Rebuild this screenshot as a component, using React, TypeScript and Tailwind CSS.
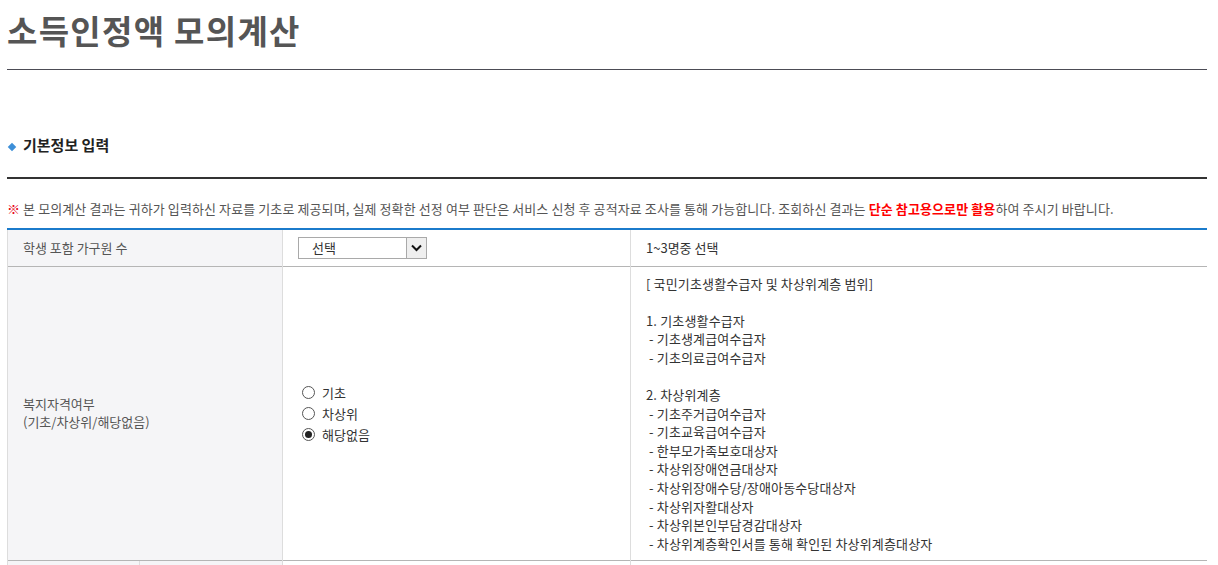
const FONT = { fontFamily: '"Malgun Gothic", "Noto Sans CJK KR", "Noto Sans", sans-serif' };

const lines = [
  "[ 국민기초생활수급자 및 차상위계층 범위]",
  "",
  "1. 기초생활수급자",
  " - 기초생계급여수급자",
  " - 기초의료급여수급자",
  "",
  "2. 차상위계층",
  " - 기초주거급여수급자",
  " - 기초교육급여수급자",
  " - 한부모가족보호대상자",
  " - 차상위장애연금대상자",
  " - 차상위장애수당/장애아동수당대상자",
  " - 차상위자활대상자",
  " - 차상위본인부담경감대상자",
  " - 차상위계층확인서를 통해 확인된 차상위계층대상자",
];

function Radio({ checked, label }: { checked?: boolean; label: string }) {
  return (
    <label className="flex items-center h-[21px] text-[13px] text-[#333]">
      <span className="w-[13px] h-[13px] rounded-full border border-[#555] bg-white flex items-center justify-center mr-[7px]">
        {checked && <span className="w-[7px] h-[7px] rounded-full bg-[#222]" />}
      </span>
      {label}
    </label>
  );
}

export default function App() {
  return (
    <div className="bg-white min-h-screen pl-[7px] pr-[11px] pb-10" style={FONT}>
      {/* 페이지 제목 */}
      <h1 className="text-[33px] font-bold text-[#555] leading-[60px] pb-[9px] border-b border-[#4c4c55] tracking-[1.3px]">
        소득인정액 모의계산
      </h1>

      {/* 섹션 제목 */}
      <h2 className="mt-[65px] flex items-center text-[15px] font-bold text-[#222] leading-[20px] pb-[22px] border-b-2 border-[#333]">
        <span className="inline-block w-[6px] h-[6px] bg-[#3d8fd8] rotate-45 ml-[2px] mr-[8px] mt-[3px]" />
        기본정보 입력
      </h2>

      <p className="mt-[20px] text-[13px] leading-[20px] text-[#555] tracking-[0.1px]">
        <span className="text-[#e60012] font-bold">※</span> 본 모의계산 결과는 귀하가 입력하신 자료를 기초로 제공되며, 실제 정확한 선정 여부 판단은 서비스 신청 후 공적자료 조사를 통해 가능합니다. 조회하신 결과는{" "}
        <span className="text-[#f00] font-bold">단순 참고용으로만 활용</span>하여 주시기 바랍니다.
      </p>

      <table className="mt-[9px] w-full table-fixed border-collapse border-t-2 border-[#1b7bcb] text-[13px]">
        <colgroup>
          <col className="w-[275px]" />
          <col className="w-[348px]" />
          <col />
        </colgroup>
        <tbody>
          <tr className="h-[37px] border-b border-[#b5b5b5]">
            <th className="bg-[#f5f5f7] border-l border-[#ddd] text-left font-normal text-[#555] pl-[15px]">
              학생 포함 가구원 수
            </th>
            <td className="border-l border-[#ddd] pl-[15px]">
              <div className="flex w-[129px] h-[22px] border border-[#a9a9a9] bg-white">
                <span className="flex-1 pl-[13px] leading-[20px] text-[#333]">선택</span>
                <span className="w-[20px] h-full border-l border-[#a9a9a9] bg-[#efefef] flex items-center justify-center">
                  <svg width="11" height="8" viewBox="0 0 11 8">
                    <path d="M1 1.5 L5.5 6 L10 1.5" fill="none" stroke="#111" strokeWidth="2" />
                  </svg>
                </span>
              </div>
            </td>
            <td className="border-l border-[#ddd] pl-[15px] text-[#333]">1~3명중 선택</td>
          </tr>
          <tr className="border-b border-[#b5b5b5]">
            <th className="bg-[#f5f5f7] border-l border-[#ddd] text-left font-normal text-[#555] pl-[15px] leading-[18px]">
              복지자격여부
              <br />
              (기초/차상위/해당없음)
            </th>
            <td className="border-l border-[#ddd] pl-[19px]">
              <div className="flex flex-col">
                <Radio label="기초" />
                <Radio label="차상위" />
                <Radio checked label="해당없음" />
              </div>
            </td>
            <td className="border-l border-[#ddd] pl-[15px] pt-[8px] pb-[7px] text-[#333] leading-[18.6px] tracking-[0.15px]">
              {lines.map((l, i) => (
                <div key={i} className="whitespace-pre h-[18.6px]">
                  {l}
                </div>
              ))}
            </td>
          </tr>
          <tr className="h-[40px] border-b border-[#b5b5b5]">
            <th className="border-l border-[#ddd] p-0 h-[40px]">
              <div className="flex h-full">
                <div className="w-[131px] bg-[#f5f5f7]" />
                <div className="flex-1 border-l border-[#ddd] bg-[#f5f5f7]" />
              </div>
            </th>
            <td className="border-l border-[#ddd]" />
            <td className="border-l border-[#ddd]" />
          </tr>
        </tbody>
      </table>
    </div>
  );
}
